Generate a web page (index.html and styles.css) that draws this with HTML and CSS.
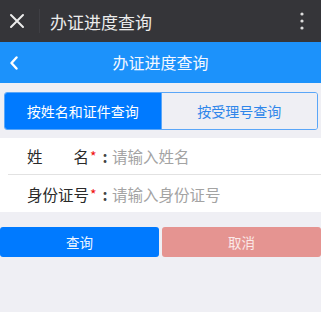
FILE: index.html
```html
<!DOCTYPE html>
<html lang="zh">
<head>
<meta charset="utf-8">
<title>办证进度查询</title>
<link rel="stylesheet" href="styles.css">
</head>
<body>
<div class="appbar">
  <svg class="close" width="16" height="16" viewBox="0 0 16 16"><path d="M2 2 L14 14 M14 2 L2 14" stroke="#ececec" stroke-width="2" fill="none" stroke-linecap="round"/></svg>
  <span class="sep"></span>
  <span class="apptitle">办证进度查询</span>
  <svg class="more" width="6" height="20" viewBox="0 0 6 20"><circle cx="3" cy="3" r="1.6" fill="#ddd"/><circle cx="3" cy="10" r="1.6" fill="#ddd"/><circle cx="3" cy="17" r="1.6" fill="#ddd"/></svg>
</div>
<div class="nav">
  <svg class="back" width="10" height="14" viewBox="0 0 10 14"><path d="M7.5 1.5 L2.5 7 L7.5 12.5" stroke="#fff" stroke-width="2.4" fill="none" stroke-linecap="round" stroke-linejoin="round"/></svg>
  <span class="navtitle">办证进度查询</span>
</div>
<div class="segment">
  <div class="seg active">按姓名和证件查询</div>
  <div class="seg">按受理号查询</div>
</div>
<div class="form">
  <div class="row">
    <span class="label">姓名</span><span class="star">*</span><span class="colon">:</span>
    <input class="field" placeholder="请输入姓名">
  </div>
  <div class="row">
    <span class="label">身份证号</span><span class="star">*</span><span class="colon">:</span>
    <input class="field" placeholder="请输入身份证号">
  </div>
</div>
<div class="buttons">
  <div class="btn primary">查询</div>
  <div class="btn cancel">取消</div>
</div>
</body>
</html>
```
FILE: styles.css
```css
html, body {
  margin: 0;
  padding: 0;
}
body {
  background: #efeff4;
  font-family: "Noto Sans CJK SC", "Noto Sans", sans-serif;
  width: 321px;
  height: 312px;
  overflow: hidden;
}
.appbar {
  height: 42px;
  background: #353539;
  display: flex;
  align-items: center;
}
.close {
  margin-left: 9px;
  flex: none;
}
.sep {
  width: 1px;
  height: 24px;
  background: #3f3f44;
  margin-left: 14px;
}
.apptitle {
  color: #ececec;
  font-size: 17px;
  margin-left: 10px;
  flex: 1;
}
.more {
  margin-right: 16px;
}
.nav {
  height: 41px;
  background: #1c92fb;
  display: flex;
  align-items: center;
  position: relative;
}
.back {
  margin-left: 9px;
}
.navtitle {
  position: absolute;
  left: 0;
  right: 0;
  text-align: center;
  color: #f4f8ff;
  font-size: 16px;
  line-height: 41px;
  pointer-events: none;
}
.segment {
  margin: 9px 3px 8px 4px;
  display: flex;
  border: 1px solid #5aa6f8;
  border-radius: 3px;
  overflow: hidden;
  height: 36px;
}
.seg {
  flex: 1;
  display: flex;
  align-items: center;
  justify-content: center;
  font-size: 14px;
  color: #2f86ea;
  background: #efeff4;
}
.seg.active {
  background: #007aff;
  color: #fff;
  border-right: 1px solid #5aa6f8;
}
.form {
  background: #fff;
}
.row {
  display: flex;
  align-items: center;
  height: 37px;
  padding-left: 27px;
  font-size: 15.5px;
  color: #2a2a2a;
}
.row:first-child {
  height: 36px;
  border-bottom: 1px solid #e2e2e2;
  margin-left: 8px;
  padding-left: 19px;
}
.label {
  width: 62px;
  text-align: justify;
  text-align-last: justify;
  flex: none;
}
.star {
  color: #f01010;
  font-size: 14px;
  margin-left: 1px;
  width: 8px;
}
.colon {
  width: 14px;
  font-weight: bold;
  text-align: center;
  color: #444;
}
.field {
  border: none;
  outline: none;
  background: transparent;
  font-family: inherit;
  font-size: 15.5px;
  padding: 0;
  margin: 0;
  flex: 1;
  min-width: 0;
  color: #333;
}
.field::placeholder {
  color: #a3a3a3;
}
.buttons {
  display: flex;
  gap: 3px;
  margin-top: 15px;
}
.btn {
  flex: 1;
  height: 30px;
  border-radius: 3px;
  display: flex;
  align-items: center;
  justify-content: center;
  font-size: 13.5px;
}
.btn.primary {
  background: #007aff;
  color: #f2f7ff;
}
.btn.cancel {
  background: #e59491;
  color: #fbe9e8;
}
```
